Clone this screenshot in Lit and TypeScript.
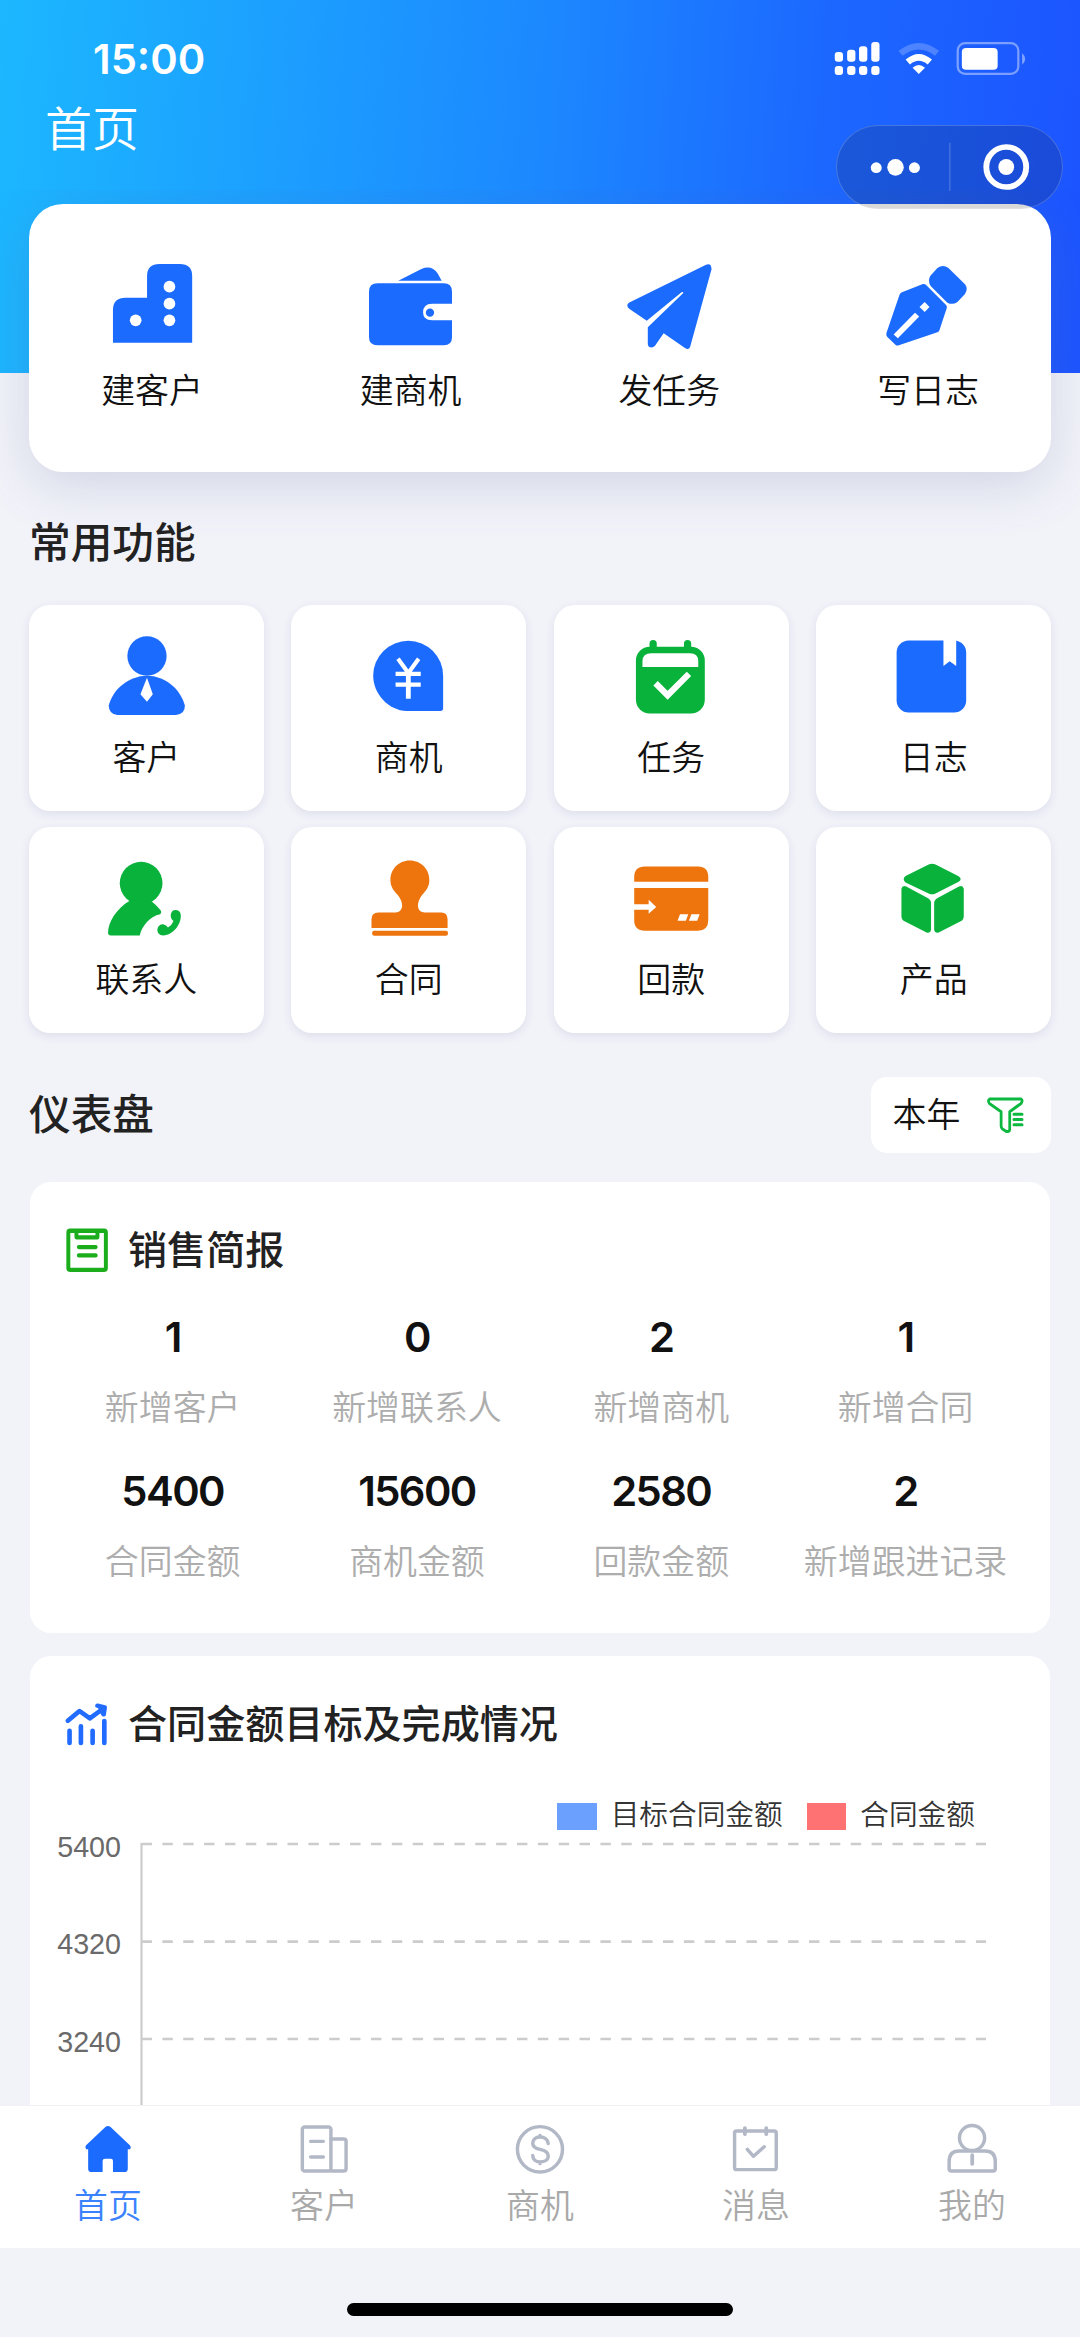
import { LitElement, html, svg, css, TemplateResult } from "lit";
import { customElement } from "lit/decorators.js";

const BLUE = "#1c6bff";
const GREEN = "#08b23b";
const ORANGE = "#ee750e";
const MUTED = "#b2b8c6";

interface Glyph {
  box: string;
  art: TemplateResult;
}

interface Entry {
  label: string;
  icon: Glyph;
}

const QUICK: Entry[] = [
  {
    label: "建客户",
    icon: {
      box: "310.7 780 261.3 270",
      art: svg`<path fill=${BLUE} d="M328 1028V930Q328 893 365 893H427V828Q427 792 463 792H522Q558 792 558 828V1028Z"/>
        <g fill="#fff"><ellipse cx="492" cy="860" rx="17" ry="17.5"/><ellipse cx="492" cy="911" rx="17" ry="17.5"/>
        <ellipse cx="492" cy="961" rx="17" ry="17.5"/><ellipse cx="394" cy="961" rx="17" ry="17.5"/></g>`,
    },
  },
  {
    label: "建商机",
    icon: {
      box: "1064.3 780 261.3 270",
      art: svg`<g fill=${BLUE}><path d="M1073 875Q1073 850 1098 850H1290Q1314 850 1314 875V911H1256Q1230 911 1230 937Q1230 961 1256 961H1314V1012Q1314 1036 1290 1036H1098Q1073 1036 1073 1012Z"/>
        <ellipse cx="1250" cy="938" rx="12" ry="12.5"/><path d="M1158 842L1225 807Q1255 794 1272 820L1284 842Z"/></g>`,
    },
  },
  {
    label: "发任务",
    icon: {
      box: "243.9 780 261.3 270",
      art: svg`<path fill=${BLUE} d="M258 908L482 794Q498 788 498 808L436 1040Q433 1050 422 1045L359 1000L334 1037Q326 1046 316 1040Q313 1036 313 1032V982L416 879Q416 875 411 877L310 962L260 927Q248 917 258 908Z"/>`,
    },
  },
  {
    label: "写日志",
    icon: {
      box: "996 780 261.3 270",
      art: svg`<g fill=${BLUE}><path d="M1154 804Q1170 792 1186 804L1234 853Q1244 867 1234 882L1212 906Q1198 916 1183 908L1135 859Q1125 845 1133 828Z"/>
        <path d="M1112 852Q1118 851 1122 856L1179 915Q1183 919 1181 925L1160 990Q1159 995 1154 997L1042 1036Q1036 1038 1032 1034L1008 1010Q1004 1006 1006 999L1044 884Q1046 879 1051 877Z"/></g>
        <path stroke="#fff" stroke-width="17" d="M1033 1009L1095 944"/><path fill="#fff" d="M1102 921L1117 906L1131 921L1117 936Z"/>`,
    },
  },
];

const FEATURES: Entry[] = [
  {
    label: "客户",
    icon: {
      box: "294.5 380.4 261.3 261.3",
      art: svg`<g fill=${BLUE}><circle cx="428" cy="453" r="57"/><path d="M428 510C482 510 526 550 538 597Q539 622 512 624H342Q317 622 317 597C328 550 375 510 428 510Z"/></g>
        <path fill="#fff" d="M428 516L445 564L428 586L409 564Z"/>`,
    },
  },
  {
    label: "商机",
    icon: {
      box: "1055.3 380.4 261.3 261.3",
      art: svg`<path fill=${BLUE} d="M1184 409A101 101 0 0 1 1285 510V605Q1285 613 1277 613H1180C1125 610 1082 562 1082 510A102 101 0 0 1 1184 409Z"/>
        <g fill="none" stroke="#fff"><path stroke-width="12" d="M1154 461L1184 502L1214 461M1147 505H1220M1147 536H1220"/><path stroke-width="14" d="M1184 499V577"/></g>`,
    },
  },
  {
    label: "任务",
    icon: {
      box: "251.2 380.4 261.3 261.3",
      art: svg`<rect x="280" y="426" width="200" height="194" rx="40" fill=${GREEN}/>
        <path stroke=${GREEN} stroke-width="21" stroke-linecap="round" d="M330 417V435M430 417V435"/>
        <path fill="#fff" d="M299 485V468Q299 445 325 445H437Q461 445 461 468V485Z"/>
        <path fill="none" stroke="#fff" stroke-width="18" d="M337 532L372 567L434 505"/>`,
    },
  },
  {
    label: "日志",
    icon: {
      box: "1012.9 380.4 261.3 261.3",
      art: svg`<rect x="1035" y="408" width="202" height="209" rx="35" fill=${BLUE}/><path fill="#fff" d="M1171 400V482L1189 468L1208 482V400Z"/>`,
    },
  },
  {
    label: "联系人",
    icon: {
      box: "294.5 1024.5 261.3 261.3",
      art: svg`<g fill=${GREEN}><circle cx="411" cy="1112" r="62"/>
        <path d="M378 1163C340 1185 315 1225 315 1256Q315 1264 323 1264H407C412 1236 438 1208 466 1202Q472 1197 467 1190Q455 1176 438 1162Z"/>
        <path d="M511 1190C527 1190 528 1206 525 1218C520 1240 500 1262 475 1264Q458 1262 458 1247Q460 1231 475 1231Q485 1233 489 1241Q500 1235 505 1222Q496 1216 497 1204Q499 1190 511 1190Z"/></g>`,
    },
  },
  {
    label: "合同",
    icon: {
      box: "1055.3 1024.5 261.3 261.3",
      art: svg`<g fill=${ORANGE}><path d="M1188 1046C1222 1046 1245 1072 1245 1103C1245 1122 1236 1133 1227 1143C1215 1158 1212 1168 1212 1180Q1214 1197 1232 1197H1280Q1298 1197 1298 1217V1242H1077V1217Q1077 1197 1097 1197H1147Q1163 1197 1166 1180C1166 1168 1163 1158 1150 1143C1141 1133 1132 1122 1132 1103C1132 1072 1155 1046 1188 1046Z"/>
        <rect x="1079" y="1250" width="220" height="15" rx="6"/></g>`,
    },
  },
  {
    label: "回款",
    icon: {
      box: "251.2 1024.5 261.3 261.3",
      art: svg`<g fill=${ORANGE}><path d="M275 1108V1095Q275 1064 306 1064H460Q490 1064 490 1095V1108Z"/>
        <path d="M275 1126H490V1220Q490 1250 460 1250H306Q275 1250 275 1220Z"/></g>
        <path fill="#fff" d="M270 1173H317V1160L339 1181L317 1201V1189H270ZM408 1202H432L425 1221H401ZM441 1202H465L458 1221H434Z"/>`,
    },
  },
  {
    label: "产品",
    icon: {
      box: "1012.9 1024.5 261.3 261.3",
      art: svg`<g fill=${GREEN}><path d="M1128 1058Q1138 1053 1148 1058L1215 1092Q1227 1100 1215 1108L1148 1142Q1138 1147 1128 1142L1061 1110Q1050 1100 1061 1091Z"/>
        <path d="M1049 1128Q1052 1117 1063 1122L1125 1155Q1135 1160 1135 1170V1248Q1133 1258 1122 1255L1058 1223Q1049 1218 1049 1208Z"/>
        <path d="M1230 1128Q1227 1117 1216 1122L1154 1155Q1144 1160 1144 1170V1248Q1146 1258 1157 1255L1221 1223Q1230 1218 1230 1208Z"/></g>`,
    },
  },
];

const STATS: [string, string][] = [
  ["1", "新增客户"],
  ["0", "新增联系人"],
  ["2", "新增商机"],
  ["1", "新增合同"],
  ["5400", "合同金额"],
  ["15600", "商机金额"],
  ["2580", "回款金额"],
  ["2", "新增跟进记录"],
];

const TABS: Entry[] = [
  {
    label: "首页",
    icon: {
      box: "226.5 87 174.2 180",
      art: svg`<path fill=${BLUE} d="M306 111Q313 105 321 111L377 166Q382 171 378 178H371V236Q371 246 361 246H328V212Q328 206 322 206H305Q298 206 298 212V246H266Q256 246 256 236V178H250Q245 172 250 166Z"/>`,
    },
  },
  {
    label: "客户",
    icon: {
      box: "853.8 87 174.2 180",
      art: svg`<g fill="none" stroke=${MUTED} stroke-width="10" stroke-linecap="round"><rect x="878" y="111" width="83" height="132" rx="7"/>
        <path d="M961 147H998Q1005 147 1005 154V236Q1005 243 998 243H961M902 154H939M902 201H939"/></g>`,
    },
  },
  {
    label: "商机",
    icon: {
      box: "1481 87 174.2 180",
      art: svg`<g fill="none" stroke=${MUTED} stroke-width="10" stroke-linecap="round"><ellipse cx="1568" cy="178" rx="65.500" ry="68"/>
        <path d="M1592 161C1591 149 1582 141 1568 141C1554 141 1547 150 1547 160C1547 172 1556 176 1568 178C1583 181 1592 186 1592 198C1592 210 1582 216 1568 216C1555 216 1547 208 1547 196M1568 136V141M1568 216V221"/></g>`,
    },
  },
  {
    label: "消息",
    icon: {
      box: "540.1 87 174.2 180",
      art: svg`<g fill="none" stroke=${MUTED} stroke-width="10" stroke-linecap="round"><rect x="565" y="123" width="121" height="116" rx="6"/>
        <path stroke-width="11" d="M595 114V133M657 114V133"/><path stroke-linejoin="round" d="M602 178L620 199L651 170"/></g>`,
    },
  },
  {
    label: "我的",
    icon: {
      box: "1167.3 87 174.2 180",
      art: svg`<g fill="none" stroke=${MUTED} stroke-width="10" stroke-linecap="round"><ellipse cx="1254.500" cy="144" rx="36.500" ry="37.500"/>
        <path d="M1217 183H1292Q1322 183 1322 215V236Q1322 243 1315 243H1195Q1188 243 1188 236V215Q1188 183 1217 183Z"/><path stroke-width="11" d="M1255 195V222"/></g>`,
    },
  },
];

const STATUS: Glyph = {
  box: "842.1 108 580.7 138",
  art: svg`<g fill="#fff"><rect x="853" y="156" width="24" height="29" rx="9"/><rect x="889" y="149" width="24" height="36" rx="9"/>
    <rect x="923.500" y="139" width="24" height="46" rx="9"/><rect x="959" y="126" width="24" height="59" rx="9"/>
    <rect x="853" y="198" width="24" height="27" rx="9"/><rect x="889" y="198" width="24" height="27" rx="9"/>
    <rect x="923.500" y="198" width="24" height="27" rx="9"/><rect x="959" y="198" width="24" height="27" rx="9"/>
    <path d="M1079 203Q1097 187 1115 203L1097 222Z"/><rect x="1222" y="144" width="104" height="65" rx="12"/>
    <path opacity=".45" d="M1397 159Q1406 168 1406 177Q1406 186 1397 194Z"/></g>
    <g fill="none" stroke="#fff"><path stroke-width="19" opacity=".22" d="M1044 160Q1097 117 1150 160"/>
    <path stroke-width="19" d="M1065 186Q1097 158 1129 186"/>
    <rect x="1210" y="129.500" width="176" height="92" rx="22" stroke-width="6.500" opacity=".42"/></g>`,
};

const CAPSULE: Glyph = {
  box: "858 375 660 252",
  art: svg`<g fill="#fff"><circle cx="975" cy="503" r="16"/><ellipse cx="1031" cy="502" rx="24" ry="25"/><circle cx="1086" cy="503" r="16"/>
    <ellipse cx="1353" cy="501" rx="23" ry="24"/></g><ellipse cx="1353" cy="501" rx="58" ry="60" fill="none" stroke="#fff" stroke-width="17"/>
    <path stroke="#fff" stroke-opacity=".25" stroke-width="3" d="M1189 428V573"/>`,
};

const FUNNEL: Glyph = {
  box: "1283.500 109 139.400 127.600",
  art: svg`<g fill="none" stroke="#0cb840" stroke-width="8" stroke-linecap="round" stroke-linejoin="round">
    <path d="M1306 130.500H1397Q1403 133 1397 142L1364 164V212Q1362 219 1353 216L1343 210Q1339 207 1339 202V164L1305 142Q1299 134 1306 130.500Z"/>
    <path d="M1376 171H1400M1376 185H1400M1376 199H1400"/></g>`,
};

const REPORT: Glyph = {
  box: "185.900 470.500 133.600 122.300",
  art: svg`<g fill="none" stroke="#1bad1b" stroke-width="11.500" stroke-linecap="round" stroke-linejoin="round">
    <rect x="198.500" y="480.500" width="109" height="104" rx="5"/><path d="M222 482V498H283V482M229 524H278M229 546H278"/></g>`,
};

const TREND: Glyph = {
  box: "185.900 183 133.600 138",
  art: svg`<g fill="none" stroke="#226bff" stroke-width="13.500" stroke-linecap="round" stroke-linejoin="round">
    <path d="M197 242L231 213L261 235L298 207M283 197L304 202L301 223L292 207M202 272V309M235 259V309M269 272V309M303 243V309"/></g>`,
};

const TICKS = [
  { label: "5400", y: 1844, base: 1856.6 },
  { label: "4320", y: 1941.6, base: 1954.4 },
  { label: "3240", y: 2039, base: 2052 },
];

const draw = (g: Glyph, cls: string) =>
  html`<svg class=${cls} viewBox=${g.box} preserveAspectRatio="none" aria-hidden="true">${g.art}</svg>`;

@customElement("app-root")
export class AppRoot extends LitElement {
  static styles = css`
    :host {
      display: flex;
      flex-direction: column;
      position: relative;
      box-sizing: border-box;
      width: 1080px;
      height: 2337px;
      overflow: hidden;
      background: linear-gradient(94deg, #1cb7ff 0%, #1c88ff 50%, #1c68ff 75%, #1c54ff 100%) 0 0 / 100% 373px no-repeat, #f2f3f9;
      color: #111;
      font-family: Inter, "Noto Sans CJK SC", sans-serif;
      font-size: 33.9px;
      font-weight: 350;
      line-height: 44px;
    }
    svg { display: block; flex: none; }
    .top { height: 190px; flex: none; color: #fff; }
    .status { display: flex; justify-content: space-between; align-items: center; padding: 36px 49.5px 0 93px; height: 46px; }
    .clock { font-size: 41.7px; font-weight: 600; }
    .status-icons { width: 200px; height: 46px; }
    .title { font-size: 47px; line-height: 60px; padding: 17px 0 0 45px; }
    .capsule {
      position: absolute; left: 835.5px; top: 125px; width: 227px; height: 84px; box-sizing: border-box;
      border-radius: 42px; background: rgba(17, 17, 17, 0.16); box-shadow: inset 0 0 0 1px rgba(255, 255, 255, 0.2);
    }
    .capsule-art { width: 227px; height: 84px; }
    .scroll { height: 1915px; flex: none; overflow: hidden; padding: 13.5px 29px 0; box-sizing: border-box; }
    .quick {
      display: flex; justify-content: space-between; box-sizing: border-box; height: 268.5px; padding: 56.5px 23px 0;
      background: #fff; border-radius: 34px; box-shadow: 0 13px 52px rgba(92, 106, 160, 0.22);
    }
    .item { display: flex; flex-direction: column; align-items: center; width: 200px; }
    .art { width: 90px; height: 90px; }
    .quick .label { margin-top: 18.5px; }
    .heading { font-size: 41.7px; font-weight: 500; line-height: 58px; color: #222; margin: 0; }
    .features-title { margin-top: 42px; }
    .features { display: grid; grid-template-columns: repeat(4, 1fr); grid-auto-rows: 206px; gap: 15.8px 27.8px; margin-top: 33px; }
    .tile {
      display: flex; flex-direction: column; align-items: center; padding-top: 26px; box-sizing: border-box;
      background: #fff; border-radius: 21px; box-shadow: 0 3px 10px rgba(40, 50, 110, 0.1);
    }
    .tile .label { margin-top: 15px; }
    .dash { display: flex; justify-content: space-between; align-items: center; height: 76px; margin-top: 44px; }
    .filter {
      display: flex; align-items: center; gap: 22px; height: 76px; width: 180px; box-sizing: border-box;
      padding-left: 21.5px; background: #fff; border-radius: 16px;
    }
    .funnel { width: 48px; height: 48px; }
    .panel { background: #fff; border-radius: 21px; margin: 29px 1px 0; box-sizing: border-box; padding-top: 45px; height: 451px; }
    .panel-title { display: flex; align-items: center; gap: 18px; padding-left: 34px; height: 46px; font-size: 39.1px; font-weight: 500; color: #222; }
    .panel-icon { width: 46px; height: 46px; }
    .stats { display: grid; grid-template-columns: repeat(4, 244.3px); row-gap: 35.5px; margin: 39px 0 0 20.5px; }
    .stat { display: flex; flex-direction: column; align-items: center; gap: 24.5px; white-space: nowrap; }
    .number { font-size: 41.7px; font-weight: 560; line-height: 50px; letter-spacing: -1.6px; }
    .caption { color: #adadad; }
    .chart-panel { margin-top: 23px; height: 700px; }
    .legend { display: flex; justify-content: flex-end; padding-right: 75px; gap: 24px; margin-top: 53px; height: 30px; font-size: 28.7px; line-height: 30px; color: #333; }
    .key { display: flex; gap: 14px; }
    .swatch { width: 39.5px; height: 27px; margin-top: 3px; }
    .target { background: #6ca0ff; }
    .actual { background: #ff7273; }
    .plot { width: 1020px; height: 275px; }
    .tick { font: 28.7px "Liberation Sans", sans-serif; fill: #6a6a6a; }
    .tabs { display: flex; flex: none; height: 143px; box-sizing: border-box; border-top: 1px solid #f1f1f3; background: #fff; }
    .tab { flex: 1; display: flex; flex-direction: column; align-items: center; padding-top: 13px; color: #a9a9a9; }
    .tab.active { color: #3b82ff; }
    .tab-icon { width: 60px; height: 60px; }
    .tab .label { margin-top: 4.5px; }
    .home { flex: 1; display: flex; justify-content: center; padding-top: 55px; }
    .bar { width: 386px; height: 13px; border-radius: 7px; background: #000; }
  `;

  render() {
    return html`
      <header class="top">
        <div class="status"><span class="clock">15:00</span>${draw(STATUS, "status-icons")}</div>
        <div class="title">首页</div>
      </header>
      <main class="scroll">
        <section class="quick">
          ${QUICK.map((q) => html`<div class="item">${draw(q.icon, "art")}<span class="label">${q.label}</span></div>`)}
        </section>
        <h2 class="heading features-title">常用功能</h2>
        <section class="features">
          ${FEATURES.map((f) => html`<div class="tile">${draw(f.icon, "art")}<span class="label">${f.label}</span></div>`)}
        </section>
        <div class="dash">
          <h2 class="heading">仪表盘</h2>
          <div class="filter"><span>本年</span>${draw(FUNNEL, "funnel")}</div>
        </div>
        <section class="panel">
          <div class="panel-title">${draw(REPORT, "panel-icon")}<span>销售简报</span></div>
          <div class="stats">
            ${STATS.map(([n, c]) => html`<div class="stat"><span class="number">${n}</span><span class="caption">${c}</span></div>`)}
          </div>
        </section>
        <section class="panel chart-panel">
          <div class="panel-title">${draw(TREND, "panel-icon")}<span>合同金额目标及完成情况</span></div>
          <div class="legend">
            <div class="key"><i class="swatch target"></i><span>目标合同金额</span></div>
            <div class="key"><i class="swatch actual"></i><span>合同金额</span></div>
          </div>
          <svg class="plot" viewBox="30 1830 1020 275">
            <path d="M141.500 1843V2110" stroke="#ccc" stroke-width="2.200" />
            ${TICKS.map(
              (t) => svg`<path d="M141.500 ${t.y}H986" stroke="#ccc" stroke-width="2.600" stroke-dasharray="10.430 10.430"/>
                <text class="tick" x="121" y=${t.base} text-anchor="end">${t.label}</text>`
            )}
          </svg>
        </section>
      </main>
      <nav class="tabs">
        ${TABS.map(
          (t, i) => html`<div class="tab ${i === 0 ? "active" : ""}">${draw(t.icon, "tab-icon")}<span class="label">${t.label}</span></div>`
        )}
      </nav>
      <div class="home"><div class="bar"></div></div>
      <div class="capsule">${draw(CAPSULE, "capsule-art")}</div>
    `;
  }
}
